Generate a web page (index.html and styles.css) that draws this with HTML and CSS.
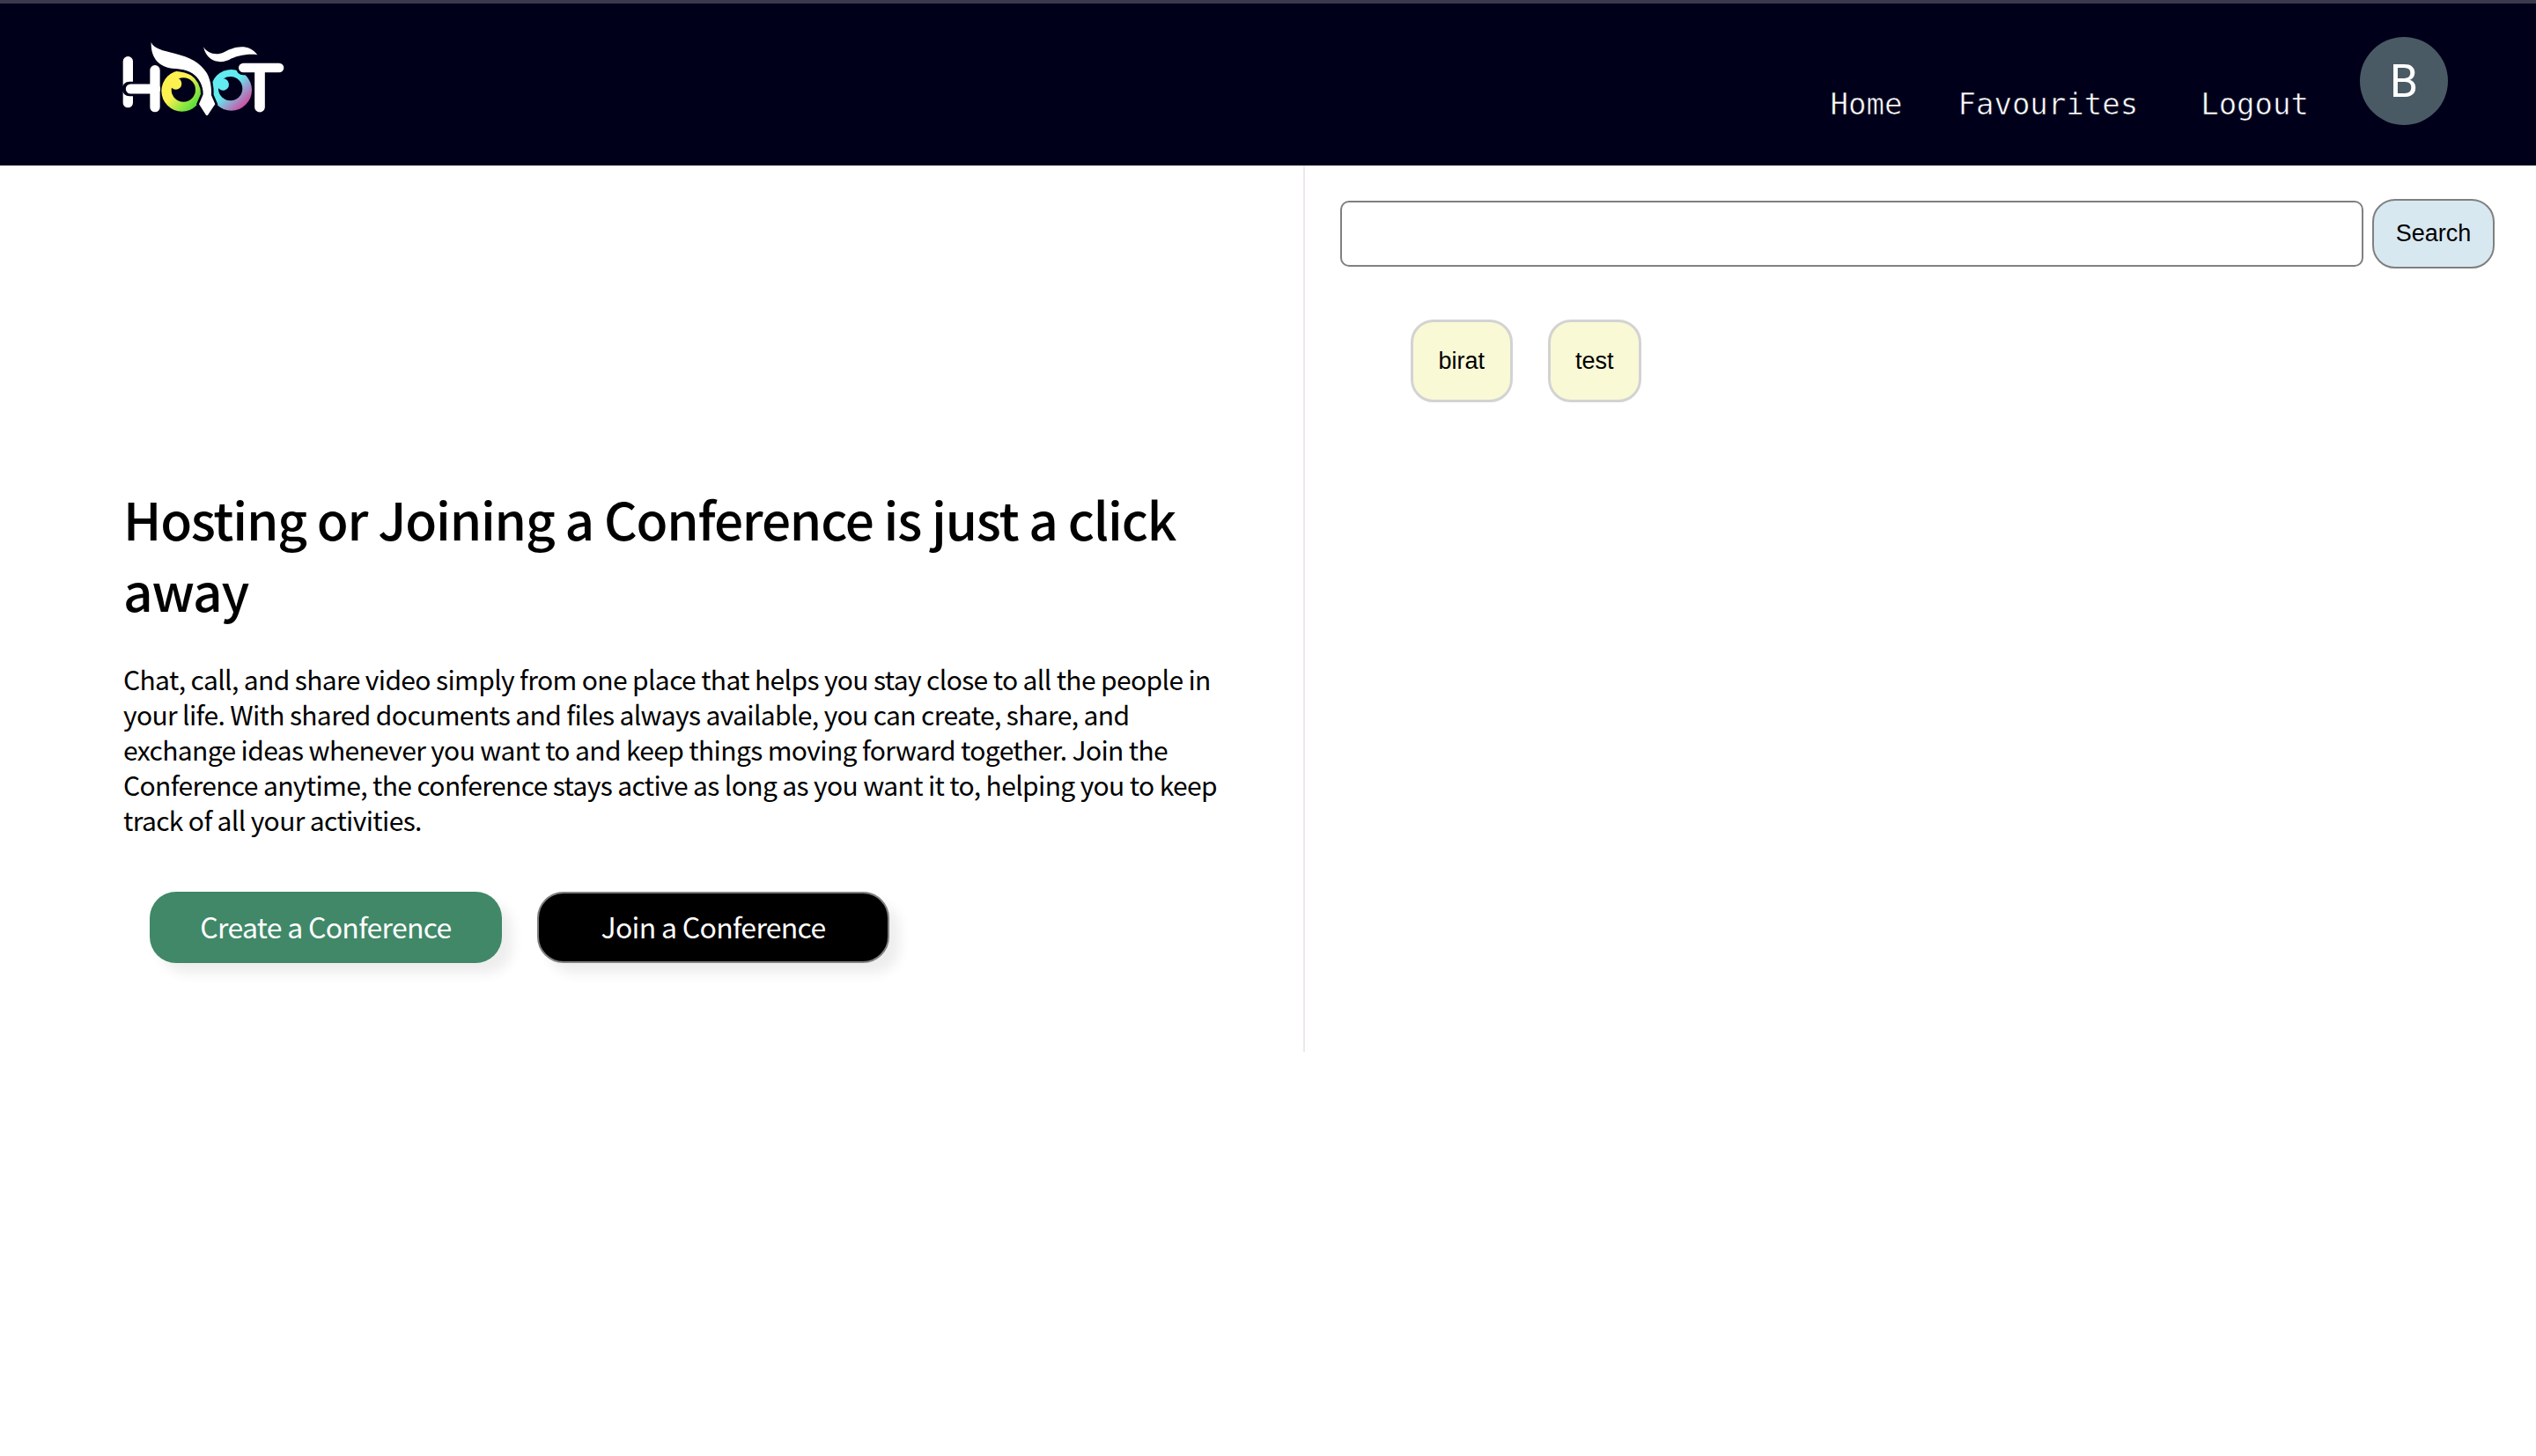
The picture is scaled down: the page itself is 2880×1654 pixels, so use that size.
FILE: index.html
```html
<!DOCTYPE html>
<html lang="en">
<head>
    <meta charset="UTF-8">
    <meta name="viewport" content="width=device-width, initial-scale=1.0">
    <title>Hoot</title>
    <link rel="stylesheet" href="styles.css">
</head>
<body>
    <header class="navbar">
        <a class="logo" href="#">
            <svg class="logo-mark" viewBox="0 0 585 276" role="img" aria-label="Hoot">
                <defs>
                    <linearGradient id="eyeLeft" x1="0" y1="0.2" x2="0.9" y2="1">
                        <stop offset="0.38" stop-color="#fdf150"/>
                        <stop offset="0.85" stop-color="#5fe03a"/>
                    </linearGradient>
                    <linearGradient id="eyeRight" x1="0" y1="0" x2="1" y2="1">
                        <stop offset="0.45" stop-color="#62ecf0"/>
                        <stop offset="0.85" stop-color="#cf4fa5"/>
                    </linearGradient>
                </defs>
                <!-- H -->
                <g fill="none" stroke-linecap="round">
                    <path d="M31 77V218" stroke="#fff" stroke-width="34"/>
                    <path d="M36 171H105" stroke="#00001a" stroke-width="50"/>
                    <path d="M123 107V233" stroke="#fff" stroke-width="34"/>
                    <path d="M40 171H125" stroke="#fff" stroke-width="33"/>
                </g>
                <!-- eyes -->
                <circle cx="215" cy="178" r="70" fill="url(#eyeLeft)"/>
                <circle cx="220" cy="174" r="41" fill="#00001a"/>
                <circle cx="194" cy="153" r="20" fill="#fdf150"/>
                <circle cx="383" cy="175" r="70" fill="url(#eyeRight)"/>
                <circle cx="380" cy="170" r="41" fill="#00001a"/>
                <circle cx="355" cy="156" r="20" fill="#62ecf0"/>
                <!-- brow and beak -->
                <path class="logo-white" d="M110 12C118 34 150 40 190 50C240 62 280 82 300 118C312 140 316 165 315 193L328 223L304 259Q300 265 296 259L273 223L287 190C288 160 272 132 250 118C225 102 195 104 172 100C140 92 108 70 110 12Z"/>
                <path class="logo-white" d="M288 28C300 48 330 60 358 46C390 28 440 12 472 55C440 50 400 58 375 72C345 86 300 80 288 28Z"/>
                <!-- T -->
                <g fill="none" stroke-linecap="round">
                    <path d="M480 115V233" stroke="#00001a" stroke-width="54"/>
                    <path d="M424 99H546" stroke="#00001a" stroke-width="50"/>
                    <path d="M424 99H546" stroke="#fff" stroke-width="32"/>
                    <path d="M480 110V233" stroke="#fff" stroke-width="35"/>
                </g>
            </svg>
        </a>
        <nav class="nav-links">
            <a class="nav-link nav-home" href="#">Home</a>
            <a class="nav-link nav-fav" href="#">Favourites</a>
            <a class="nav-link nav-logout" href="#">Logout</a>
        </nav>
        <div class="avatar">B</div>
    </header>

    <main class="home">
        <section class="intro">
            <h1>Hosting or Joining a Conference is just a click away</h1>
            <p>Chat, call, and share video simply from one place that helps you stay close to all the people in your life. With shared documents and files always available, you can create, share, and exchange ideas whenever you want to and keep things moving forward together. Join the Conference anytime, the conference stays active as long as you want it to, helping you to keep track of all your activities.</p>
            <div class="actions">
                <button class="btn btn-create" type="button">Create a Conference</button>
                <button class="btn btn-join" type="button">Join a Conference</button>
            </div>
        </section>
        <section class="search-panel">
            <form class="search-form">
                <input class="search-input" type="text" aria-label="Search">
                <button class="search-btn" type="button">Search</button>
            </form>
            <div class="chips">
                <button class="chip" type="button">birat</button>
                <button class="chip" type="button">test</button>
            </div>
        </section>
    </main>
</body>
</html>
```

FILE: styles.css
```css
* {
    box-sizing: border-box;
}
body {
    margin: 0;
    background-color: #fff;
    color: #000;
    font-family: "Noto Sans CJK SC", "Noto Sans", sans-serif;
}
.navbar {
    display: flex;
    height: 188px;
    padding: 38px 100px 0 135px;
    background-color: #00001a;
    border-top: 4px solid #3a3a4c;
}
.logo {
    display: block;
    height: 92px;
    margin-top: 2px;
}
.logo-mark {
    display: block;
    width: 195px;
    height: 92px;
}
.logo-white {
    fill: #fff;
    stroke: #00001a;
    stroke-width: 16px;
    paint-order: stroke;
}
.nav-links {
    display: flex;
    align-items: baseline;
    margin-left: auto;
    padding-top: 56px;
    font-family: "DejaVu Sans Mono", monospace;
    font-size: 34px;
}
.nav-link {
    color: #fff;
    text-decoration: none;
    -webkit-text-stroke: 0.6px #00001a;
}
.nav-fav {
    margin-left: 63px;
}
.nav-logout {
    margin-left: 71px;
}
.avatar {
    display: flex;
    align-items: center;
    justify-content: center;
    width: 100px;
    height: 100px;
    margin-left: 58px;
    border-radius: 50%;
    background-color: #4a5a64;
    color: #fff;
    font-family: Roboto, sans-serif;
    font-size: 52px;
}
.home {
    display: flex;
    height: 1007px;
}
.intro {
    width: 1482px;
    padding: 360px 90px 0 140px;
    border-right: 2px solid #eee8ee;
}
.intro h1 {
    margin: 0;
    font-size: 58.5px;
    font-weight: 500;
    letter-spacing: -1.2px;
    line-height: 81px;
}
.intro p {
    margin: 41px 0 0;
    font-size: 30px;
    letter-spacing: -0.63px;
    line-height: 40px;
}
.actions {
    display: flex;
    gap: 40px;
    margin: 62px 0 0 30px;
}
.btn {
    width: 400px;
    height: 81px;
    padding: 0 0 3px;
    border-radius: 30px;
    color: #fff;
    font-family: inherit;
    font-size: 32px;
    letter-spacing: -0.7px;
    box-shadow: 12px 12px 14px rgba(0, 0, 0, 0.07);
}
.btn-create {
    background-color: #408868;
    border: none;
}
.btn-join {
    background-color: #000;
    border: 2px solid #808080;
}
.search-panel {
    flex: 1;
    padding: 38px 47px 0 40px;
    font-family: "Liberation Sans", Arial, sans-serif;
}
.search-form {
    display: flex;
    align-items: center;
    gap: 10px;
}
.search-input {
    flex: 1;
    height: 75px;
    border: 2px solid #808080;
    border-radius: 10px;
    background-color: #fff;
}
.search-btn {
    width: 139px;
    height: 79px;
    border: 2px solid #808080;
    border-radius: 26px;
    background-color: #d8e8f0;
    color: #000;
    font-family: inherit;
    font-size: 27px;
}
.chips {
    display: flex;
    gap: 40px;
    margin: 58px 0 0 80px;
}
.chip {
    height: 94px;
    padding: 0 28.5px;
    border: 3px solid #d3d3d3;
    border-radius: 26px;
    background-color: #f9f9d6;
    color: #000;
    font-family: inherit;
    font-size: 27px;
}
```
